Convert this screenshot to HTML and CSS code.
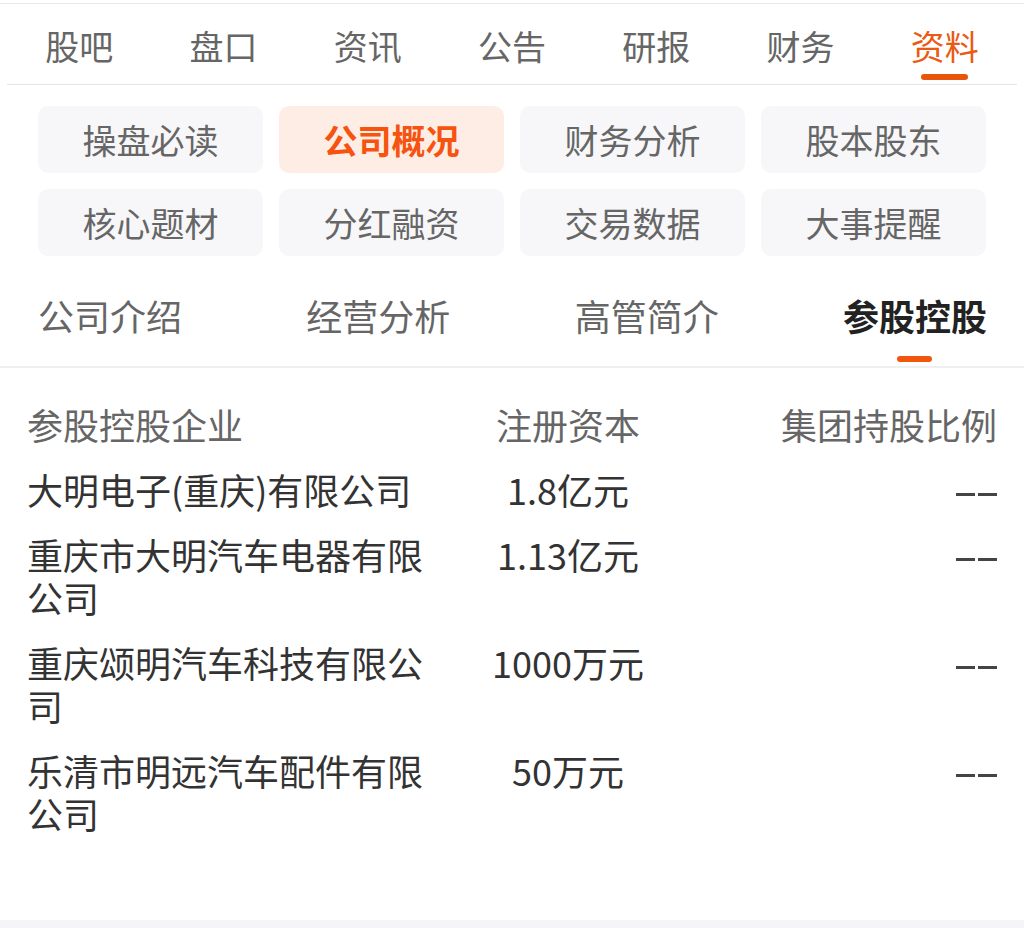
FILE: index.html
```html
<!DOCTYPE html>
<html lang="zh-CN">
<head>
<meta charset="utf-8">
<title>资料 - 参股控股</title>
<link rel="stylesheet" href="styles.css">
</head>
<body>
<div class="page">
  <div class="topline"></div>
  <nav class="tabs">
    <div class="tab">股吧</div>
    <div class="tab">盘口</div>
    <div class="tab">资讯</div>
    <div class="tab">公告</div>
    <div class="tab">研报</div>
    <div class="tab">财务</div>
    <div class="tab tab-active">资料<span class="tab-bar"></span></div>
  </nav>

  <div class="btn-grid">
    <div class="btn">操盘必读</div>
    <div class="btn btn-active">公司概况</div>
    <div class="btn">财务分析</div>
    <div class="btn">股本股东</div>
    <div class="btn">核心题材</div>
    <div class="btn">分红融资</div>
    <div class="btn">交易数据</div>
    <div class="btn">大事提醒</div>
  </div>

  <nav class="subtabs">
    <div class="subtab">公司介绍</div>
    <div class="subtab">经营分析</div>
    <div class="subtab">高管简介</div>
    <div class="subtab subtab-active">参股控股<span class="subtab-bar"></span></div>
  </nav>

  <section class="table">
    <div class="row row-head">
      <div class="c-name">参股控股企业</div>
      <div class="c-cap">注册资本</div>
      <div class="c-ratio">集团持股比例</div>
    </div>
    <div class="row">
      <div class="c-name">大明电子(重庆)有限公司</div>
      <div class="c-cap">1.8亿元</div>
      <div class="c-ratio"><span class="dash"></span><span class="dash"></span></div>
    </div>
    <div class="row">
      <div class="c-name">重庆市大明汽车电器有限公司</div>
      <div class="c-cap">1.13亿元</div>
      <div class="c-ratio"><span class="dash"></span><span class="dash"></span></div>
    </div>
    <div class="row">
      <div class="c-name">重庆颂明汽车科技有限公司</div>
      <div class="c-cap">1000万元</div>
      <div class="c-ratio"><span class="dash"></span><span class="dash"></span></div>
    </div>
    <div class="row">
      <div class="c-name">乐清市明远汽车配件有限公司</div>
      <div class="c-cap">50万元</div>
      <div class="c-ratio"><span class="dash"></span><span class="dash"></span></div>
    </div>
  </section>
</div>
</body>
</html>
```

FILE: styles.css
```css
html, body {
  margin: 0;
  padding: 0;
}
body {
  background: #f5f5f7;
  font-family: "Noto Sans CJK SC", "Noto Sans", sans-serif;
  color: #333;
}
.page {
  background: #fff;
}
.topline {
  height: 3px;
  border-bottom: 1px solid #e8e8e8;
}

/* top tabs */
.tabs {
  display: flex;
  margin: 0 7px;
  border-bottom: 1px solid #e6e6e6;
}
.tab {
  flex: 1;
  height: 80px;
  box-sizing: border-box;
  padding-top: 25px;
  display: flex;
  flex-direction: column;
  align-items: center;
  font-size: 34px;
  line-height: 34px;
  color: #666;
}
.tab-active {
  color: #ea5a12;
}
.tab-bar {
  display: block;
  width: 47px;
  height: 6px;
  margin-top: 11px;
  border-radius: 3px;
  background: #e8560d;
}

/* button grid */
.btn-grid {
  display: grid;
  grid-template-columns: repeat(4, 225px);
  grid-auto-rows: 67px;
  gap: 16px;
  padding: 21px 0 0 38px;
}
.btn {
  display: flex;
  align-items: center;
  justify-content: center;
  background: #f7f7f9;
  border-radius: 10px;
  font-size: 34px;
  color: #666;
}
.btn-active {
  background: #fdede5;
  color: #f5530f;
  font-weight: 700;
}

/* sub tabs */
.subtabs {
  display: flex;
  justify-content: space-between;
  padding: 41px 37px 0 38px;
  border-bottom: 2px solid #f0f0f0;
}
.subtab {
  display: flex;
  flex-direction: column;
  align-items: center;
  height: 69px;
  font-size: 36px;
  line-height: 36px;
  color: #666;
}
.subtab-active {
  color: #222;
  font-weight: 700;
}
.subtab-bar {
  display: block;
  width: 35px;
  height: 6px;
  margin-top: 23px;
  border-radius: 3px;
  background: #f2560e;
}

/* table */
.table {
  padding: 24px 27px 74px 27px;
}
.row {
  display: grid;
  grid-template-columns: 410px 262px 1fr;
  padding: 11px 0;
  font-size: 36px;
  line-height: 43px;
  color: #333;
}
.row-head {
  color: #666;
}
.c-cap {
  text-align: center;
}
.c-ratio {
  text-align: right;
}
.c-ratio .dash {
  display: inline-block;
  width: 19px;
  height: 3px;
  margin-left: 3px;
  background: #444;
  vertical-align: middle;
  position: relative;
  top: -1px;
}
```
